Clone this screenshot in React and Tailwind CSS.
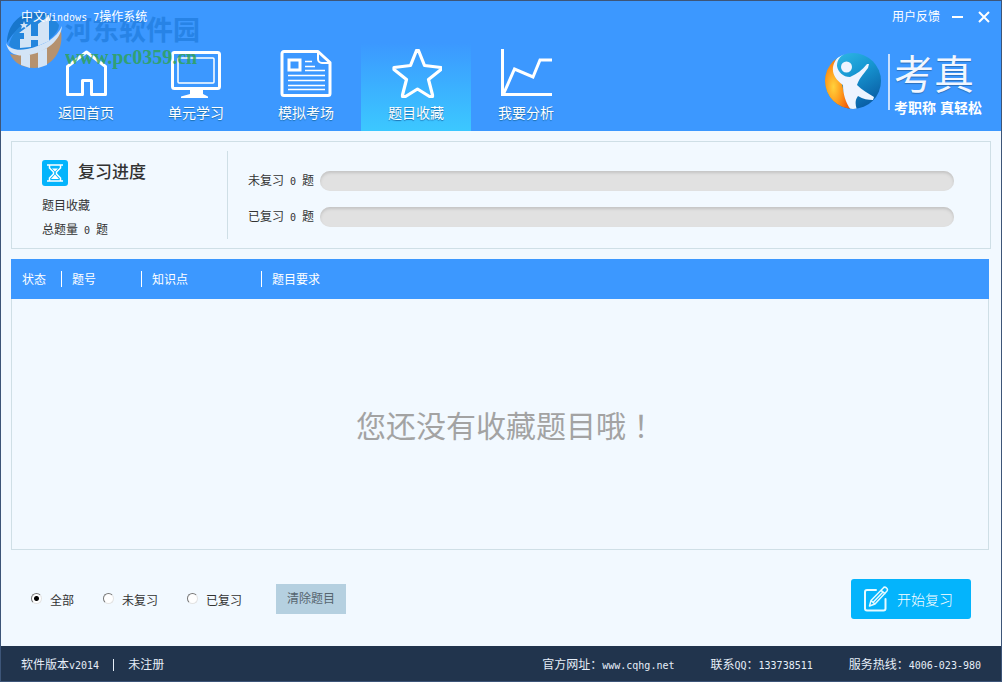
import { useState } from 'react';

const navItems = [
  { id: 'home', label: '返回首页', icon: HomeIcon },
  { id: 'study', label: '单元学习', icon: MonitorIcon },
  { id: 'exam', label: '模拟考场', icon: PaperIcon },
  { id: 'favorite', label: '题目收藏', icon: StarIcon },
  { id: 'analysis', label: '我要分析', icon: ChartIcon },
];

const filters = [
  { id: 'all', label: '全部', width: 'w-[72px]' },
  { id: 'todo', label: '未复习', width: 'w-[84px]' },
  { id: 'done', label: '已复习', width: 'w-[89px]' },
];

function HomeIcon() {
  return (
    <svg width="52" height="52" viewBox="0 0 52 52" fill="none" stroke="white" strokeWidth="3">
      <path d="M7.500 45.500V17.500L26.500 3 45.500 17.500v28H31.500V31.500H22.500V45.500Z" strokeLinejoin="round" />
    </svg>
  );
}

function MonitorIcon() {
  return (
    <svg width="52" height="52" viewBox="0 0 52 52" fill="none" stroke="white">
      <rect x="2.500" y="3.500" width="47" height="36" rx="2" strokeWidth="3" />
      <rect x="8" y="9" width="36" height="25" rx="1" strokeWidth="1.500" />
      <path d="M20 41h13v4l5 2.500v1.500H11v-1.500l9-2.500z" fill="white" stroke="none" />
    </svg>
  );
}

function PaperIcon() {
  return (
    <svg width="52" height="52" viewBox="0 0 52 52" fill="none" stroke="white">
      <path d="M4 2.500h34L50 13.500v31a2 2 0 0 1-2 2H4a2 2 0 0 1-2-2V4.500a2 2 0 0 1 2-2Z" strokeWidth="3" strokeLinejoin="round" />
      <path d="M38 3v7a4 4 0 0 0 4 4h8" strokeWidth="2" />
      <rect x="9" y="11" width="11" height="10" strokeWidth="3" />
      <path d="M25 12.500h7M25 17.500h10M25 21.500h20M8 26.500h37M8 31.500h37M8 36.500h37M8 40.500h37" strokeWidth="1.500" />
    </svg>
  );
}

function StarIcon() {
  return (
    <svg width="52" height="52" viewBox="0 0 52 52" fill="none" stroke="white" strokeWidth="3.200" strokeLinejoin="round">
      <path d="M26.500 1.500h2L34.500 16.500 51 18.500v2L38.500 30.500 42.500 46v1.500h-3L27.500 40 15.500 47.500h-3V46L16.500 30.500 4 20.500v-2L20.500 16.500Z" />
    </svg>
  );
}

function ChartIcon() {
  return (
    <svg width="54" height="52" viewBox="0 0 54 52" fill="none" stroke="white" strokeWidth="3">
      <path d="M3.500 0v45.500H53" />
      <path d="M4.500 45 15.500 20 34 28 41 11H53" />
    </svg>
  );
}

function BrandMark() {
  return (
    <svg width="58" height="58" viewBox="0 0 58 58" aria-hidden="true">
      <defs>
        <linearGradient id="brandBlue" x1="0" y1="0" x2="0.600" y2="1">
          <stop offset="0" stopColor="#36c0ea" />
          <stop offset="0.500" stopColor="#1797d2" />
          <stop offset="1" stopColor="#0a5fa6" />
        </linearGradient>
        <radialGradient id="brandOrange" cx="0.350" cy="0.600" r="0.600">
          <stop offset="0" stopColor="#ffd23c" />
          <stop offset="0.500" stopColor="#ff9b1c" />
          <stop offset="1" stopColor="#f2600c" />
        </radialGradient>
        <clipPath id="brandClip">
          <circle cx="29" cy="29" r="28" />
        </clipPath>
      </defs>
      <g clipPath="url(#brandClip)">
        <rect width="58" height="58" fill="url(#brandBlue)" />
        <path d="M16 0C8 10 8 22 18 32c2 10 4 18 9 26H0V0Z" fill="url(#brandOrange)" />
        <path d="M19 0C5 12 6 24 19 33c0 10 3 18 8 25h6c-2-6-2-10 1-14 5 3 10 4 15 4l1-3c-6-4-12-7-17-12 2-6 5-9 11-17l1-4-2 0c-5 6-10 10-17 13-7 0-12-5-13-11 0-6 3-10 9-13Z" fill="#eef4ff" />
      </g>
      <circle cx="22.500" cy="15" r="5.500" fill="#eef4ff" />
    </svg>
  );
}

function HourglassIcon() {
  return (
    <svg width="26" height="26" viewBox="0 0 26 26" fill="none" aria-hidden="true">
      <rect width="26" height="26" rx="3" fill="#04b4fc" />
      <path d="M5 5h16M5 21h16M7.500 5.500v2.500l4 4v2l-4 4v2.500M18.500 5.500v2.500l-4 4v2l4 4v2.500" stroke="white" strokeWidth="1.500" />
      <path d="M10 8.500h6l-3 3zM13 14.500l4 4.500H9z" fill="white" />
    </svg>
  );
}

function EditIcon() {
  return (
    <svg width="26" height="26" viewBox="0 0 26 26" fill="none" stroke="#e6faff" strokeWidth="2" strokeLinejoin="round" strokeLinecap="round" aria-hidden="true">
      <path d="M13 4H4a2 2 0 0 0-2 2v16.500a2 2 0 0 0 2 2h16.500a2 2 0 0 0 2-2V13" />
      <path d="M6.500 20 8 14.500 20 2.200a2.400 2.400 0 0 1 3.800 3L12 18ZM18 4.300l4 3.300M8 14.500l4 3.500M10 16.500 19.500 6.500" strokeWidth="1.500" />
    </svg>
  );
}

function SiteMark() {
  return (
    <svg width="58" height="60" viewBox="0 0 58 60" aria-hidden="true">
      <path d="M2 34C2 15 16 2 33 3c8 0 14 4 18 9-9-4-18-4-27 1C12 19 6 27 2 34Z" fill="#1876cc" />
      <path d="M4 36C8 20 22 9 37 8c8 0 14 3 17 8 0 9-14 20-31 24-8 2-15 1-19-4Z" fill="#2385dd" />
      <path d="M5 45c18 4 38-5 51-23 3 20-9 36-26 37C18 59 9 54 5 45Z" fill="#b5926f" />
      <path d="M1 34c3 6 11 8 21 6 16-3 30-11 35-23-1 14-16 26-33 29-12 2-21-1-23-12Z" fill="#d3e4f6" />
      <path d="M14 24l12-9v23l-11 1v-9h4v-6ZM33 15l11-8v25l-11 5ZM16 46h9v13l-9-3ZM33 43l9-4v17l-9 3ZM26 27h7v4h-7Z" fill="#d3e4f6" />
      <path d="M19 12l1 3h3l-2 2 1 3-3-2-3 2 1-3-2-2h3Z" fill="#d3e4f6" />
    </svg>
  );
}

// Half-width latin text next to the full-width characters
function Latin({ children }) {
  return <span className="font-['DejaVu_Sans_Mono',monospace] text-[10px]">{children}</span>;
}

function ProgressRow({ label, count, total }) {
  const percent = total ? (count / total) * 100 : 0;
  return (
    <div className="flex items-center h-5">
      <span className="w-[72px] shrink-0 whitespace-pre">{label}<Latin>{` ${count} `}</Latin>题</span>
      <div
        role="progressbar"
        aria-label={label}
        aria-valuenow={percent}
        className="flex-1 h-5 rounded-full bg-[#e1e1e1] overflow-hidden shadow-[inset_0_2px_3px_#c4c4c4]"
      >
        <div className="h-full bg-[#3c98ff]" style={{ width: `${percent}%` }} />
      </div>
    </div>
  );
}

export default function App() {
  const [active, setActive] = useState('favorite');
  const [filter, setFilter] = useState('all');

  return (
    <div className="min-h-screen flex flex-col border border-[#3d5578] bg-[#f2f9ff] font-['Liberation_Sans','Noto_Sans_CJK_SC',sans-serif] text-xs text-[#333]">
      {/* Header */}
      <header className="relative bg-[#3c98ff] text-white">
        <div className="flex items-center justify-between h-8 pl-5 pr-[11px]">
          <h1 className="relative z-10 whitespace-pre">中文<Latin>Windows 7</Latin>操作系统</h1>
          <div className="flex items-center">
            <button type="button">用户反馈</button>
            <button type="button" aria-label="最小化" className="ml-2.5 p-0.5">
              <svg width="12" height="12" viewBox="0 0 12 12" stroke="white" strokeWidth="2"><path d="M0 6h11" /></svg>
            </button>
            <button type="button" aria-label="关闭" className="ml-3">
              <svg width="12" height="12" viewBox="0 0 12 12" stroke="white" strokeWidth="2"><path d="M1 1l10 10M11 1 1 11" /></svg>
            </button>
          </div>
        </div>

        <div className="flex justify-between pl-[30px] pr-[19px]">
          <nav className="flex">
            {navItems.map(({ id, label, icon: Icon }) => (
              <button
                key={id}
                type="button"
                onClick={() => setActive(id)}
                className={`w-[110px] h-[98px] flex flex-col items-center pt-4 text-sm leading-5 ${
                  active === id ? 'bg-linear-to-b from-[#3c98ff] from-10% to-[#3cc8ff]' : ''
                }`}
              >
                <Icon />
                <span className="mt-0.5 text-shadow-[0_1px_1px_#1c6fae]">{label}</span>
              </button>
            ))}
          </nav>

          <div className="flex items-start pt-[19px]">
            <BrandMark />
            <div className="ml-1.5 mt-0.5 pl-1 h-14 border-l-2 border-[#c8e0ff]">
              <p className="text-[40px] leading-[42px] text-[#f2f7ff] text-shadow-[0_1px_1px_#2b6fbb]">考真</p>
              <p className="mt-1 text-sm leading-4 font-bold whitespace-nowrap">考职称 真轻松</p>
            </div>
          </div>
        </div>

        {/* Site stamp lies under the title and over the first icons */}
        <div className="absolute left-1 top-2 flex pointer-events-none">
          <SiteMark />
          <div className="ml-0.5 pt-1.5 whitespace-nowrap">
            <p className="text-[27px] leading-8 font-bold text-[#237fe0] opacity-80">河东软件园</p>
            <p className="font-['Liberation_Serif',serif] text-xl leading-5 font-bold text-[#2fa352] opacity-80">www.pc0359.cn</p>
          </div>
        </div>
      </header>

      <main className="flex-1 flex flex-col px-2.5">
        {/* Review progress */}
        <section className="mt-2.5 flex items-center h-[108px] border border-[#cfdfe6]">
          <div className="w-[216px] h-[88px] pt-[9px] pl-[30px] border-r border-[#cfdfe6]">
            <div className="flex items-center gap-2.5 h-[26px]">
              <HourglassIcon />
              <h2 className="text-[17px] font-medium">复习进度</h2>
            </div>
            <p className="mt-2 leading-6">题目收藏</p>
            <p className="leading-6 whitespace-pre">总题量<Latin>{' 0 '}</Latin>题</p>
          </div>
          <div className="flex-1 flex flex-col gap-4 pt-2 pl-5 pr-9">
            <ProgressRow label="未复习" count={0} total={0} />
            <ProgressRow label="已复习" count={0} total={0} />
          </div>
        </section>

        {/* Question list */}
        <section className="mt-2.5 mr-0.5 flex-1 flex flex-col">
          <table className="w-full table-fixed bg-[#3c98ff] text-white">
            <thead>
              <tr className="h-10 text-left">
                <th className="w-[51px] p-0 font-normal"><div className="pl-[11px] border-r border-white h-4 leading-[18px]">状态</div></th>
                <th className="w-20 p-0 font-normal"><div className="pl-2.5 border-r border-white h-4 leading-[18px]">题号</div></th>
                <th className="w-[120px] p-0 font-normal"><div className="pl-2.5 border-r border-white h-4 leading-[18px]">知识点</div></th>
                <th className="p-0 font-normal"><div className="pl-2.5 h-4 leading-[18px]">题目要求</div></th>
              </tr>
            </thead>
          </table>
          <div className="flex-1 flex items-center justify-center border border-t-0 border-[#cfdfe6]">
            <p className="pt-0.5 pl-3 text-3xl text-[#a3a3a3]">
              您还没有收藏题目哦<span className="font-['Noto_Sans_CJK_TC',sans-serif]" lang="zh-TW">！</span>
            </p>
          </div>
        </section>

        {/* Filters and actions */}
        <div className="flex items-center h-24 pt-0.5 px-5">
          {filters.map((item) => (
            <label key={item.id} className={`flex items-center ${item.width}`}>
              <input
                type="radio"
                name="filter"
                value={item.id}
                checked={filter === item.id}
                onChange={() => setFilter(item.id)}
                className="appearance-none w-[11px] h-[11px] mb-0.5 mr-2 rounded-full bg-white border border-t-[#777] border-l-[#777] border-r-[#e3e3e3] border-b-[#e3e3e3] checked:bg-[radial-gradient(circle,#000_2px,#fff_3px)]"
              />
              <span className="pt-1">{item.label}</span>
            </label>
          ))}
          <button type="button" className="w-[70px] h-[30px] bg-[#b5d0e0] text-[#56656f]">清除题目</button>
          <button
            type="button"
            className="ml-auto w-[120px] h-10 pl-3 flex items-center gap-2 rounded-[3px] bg-[#04b4fc] text-sm font-light text-white"
          >
            <EditIcon />
            <span className="pt-0.5">开始复习</span>
          </button>
        </div>
      </main>

      {/* Footer */}
      <footer className="flex items-center justify-between h-[35px] pt-0.5 px-5 bg-[#21344d] text-[#e6eef8]">
        <div className="flex items-center">
          <span>软件版本<Latin>v2014</Latin></span>
          <span className="mx-3.5 h-3 border-l border-[#e6eef8]" />
          <span>未注册</span>
        </div>
        <div className="flex items-center gap-9">
          <span>官方网址：<a href="http://www.cqhg.net"><Latin>www.cqhg.net</Latin></a></span>
          <span>联系<Latin>QQ</Latin>：<Latin>133738511</Latin></span>
          <span>服务热线：<Latin>4006-023-980</Latin></span>
        </div>
      </footer>
    </div>
  );
}
